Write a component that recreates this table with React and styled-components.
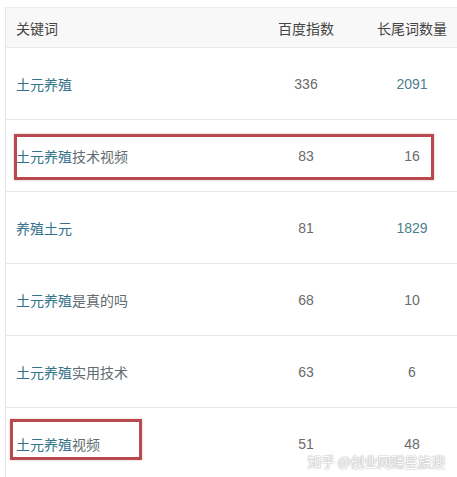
import React from 'react'
import styled, { createGlobalStyle } from 'styled-components'

const Global = createGlobalStyle`
body {
  margin: 0;
  background: #fff;
  font-family: "Liberation Sans", "Noto Sans CJK SC", sans-serif;
}
`

const Page = styled.div`
position: relative;
width: 457px;
height: 477px;
overflow: hidden;
padding: 7px 0 0 5px;
box-sizing: border-box;
`

const Table = styled.div`
width: 470px;
border-left: 1px solid #e6e6e6;
border-top: 1px solid #ececec;
`

const Row = styled.div`
position: relative;
display: grid;
grid-template-columns: 244px 112px 100px 1fr;
align-items: center;
height: ${p => (p.head ? '39px' : '71px')};
background: ${p => (p.head ? '#f8f8f8' : '#fff')};
border-bottom: 1px solid #e8e8e8;
font-size: 14px;
`

const Keyword = styled.div`
padding-left: 10px;
color: #626c70;
font-family: "Noto Sans CJK SC", sans-serif;
`

const Head = styled.div`
color: #454545;
font-family: "Noto Sans CJK SC", sans-serif;
text-align: ${p => (p.left ? 'left' : 'center')};
padding-left: ${p => (p.left ? '10px' : '0')};
`

const Hit = styled.span`
color: #33708a;
`

const Num = styled.div`
text-align: center;
color: ${p => (p.link ? '#4e7f8e' : '#6a6a6a')};
`

const Mark = styled.div`
position: absolute;
left: ${p => p.x}px;
top: ${p => p.y}px;
width: ${p => p.w}px;
height: ${p => p.h}px;
border: 3px solid #b8494e;
box-sizing: border-box;
box-shadow: 0 0 2px rgba(200, 80, 80, 0.4);
`

const Watermark = styled.div`
position: absolute;
right: 12px;
bottom: 6px;
font-family: "Noto Sans CJK SC", sans-serif;
font-size: 13.5px;
color: #fff;
text-shadow: 0 0 1px #999, 0 0 2px #bbb;
`

const rows = [
  { hit: '土元养殖', rest: '', idx: 336, tail: 2091, link: true },
  { hit: '土元养殖', rest: '技术视频', idx: 83, tail: 16, mark: { x: 8, y: 14, w: 420, h: 46 } },
  { hit: '养殖土元', rest: '', idx: 81, tail: 1829, link: true },
  { hit: '土元养殖', rest: '是真的吗', idx: 68, tail: 10 },
  { hit: '土元养殖', rest: '实用技术', idx: 63, tail: 6 },
  { hit: '土元养殖', rest: '视频', idx: 51, tail: 48, mark: { x: 4, y: 11, w: 132, h: 41 } },
]

const App = () => {
  return (
    <Page>
      <Global />
      <Table>
        <Row head>
          <Head left>关键词</Head>
          <Head>百度指数</Head>
          <Head>长尾词数量</Head>
        </Row>
        {rows.map((r, i) => (
          <Row key={i}>
            <Keyword><Hit>{r.hit}</Hit>{r.rest}</Keyword>
            <Num>{r.idx}</Num>
            <Num link={r.link}>{r.tail}</Num>
            {r.mark && <Mark {...r.mark} />}
          </Row>
        ))}
      </Table>
      <Watermark>知乎 @创业网赚星族迎</Watermark>
    </Page>
  )
}

export default App
